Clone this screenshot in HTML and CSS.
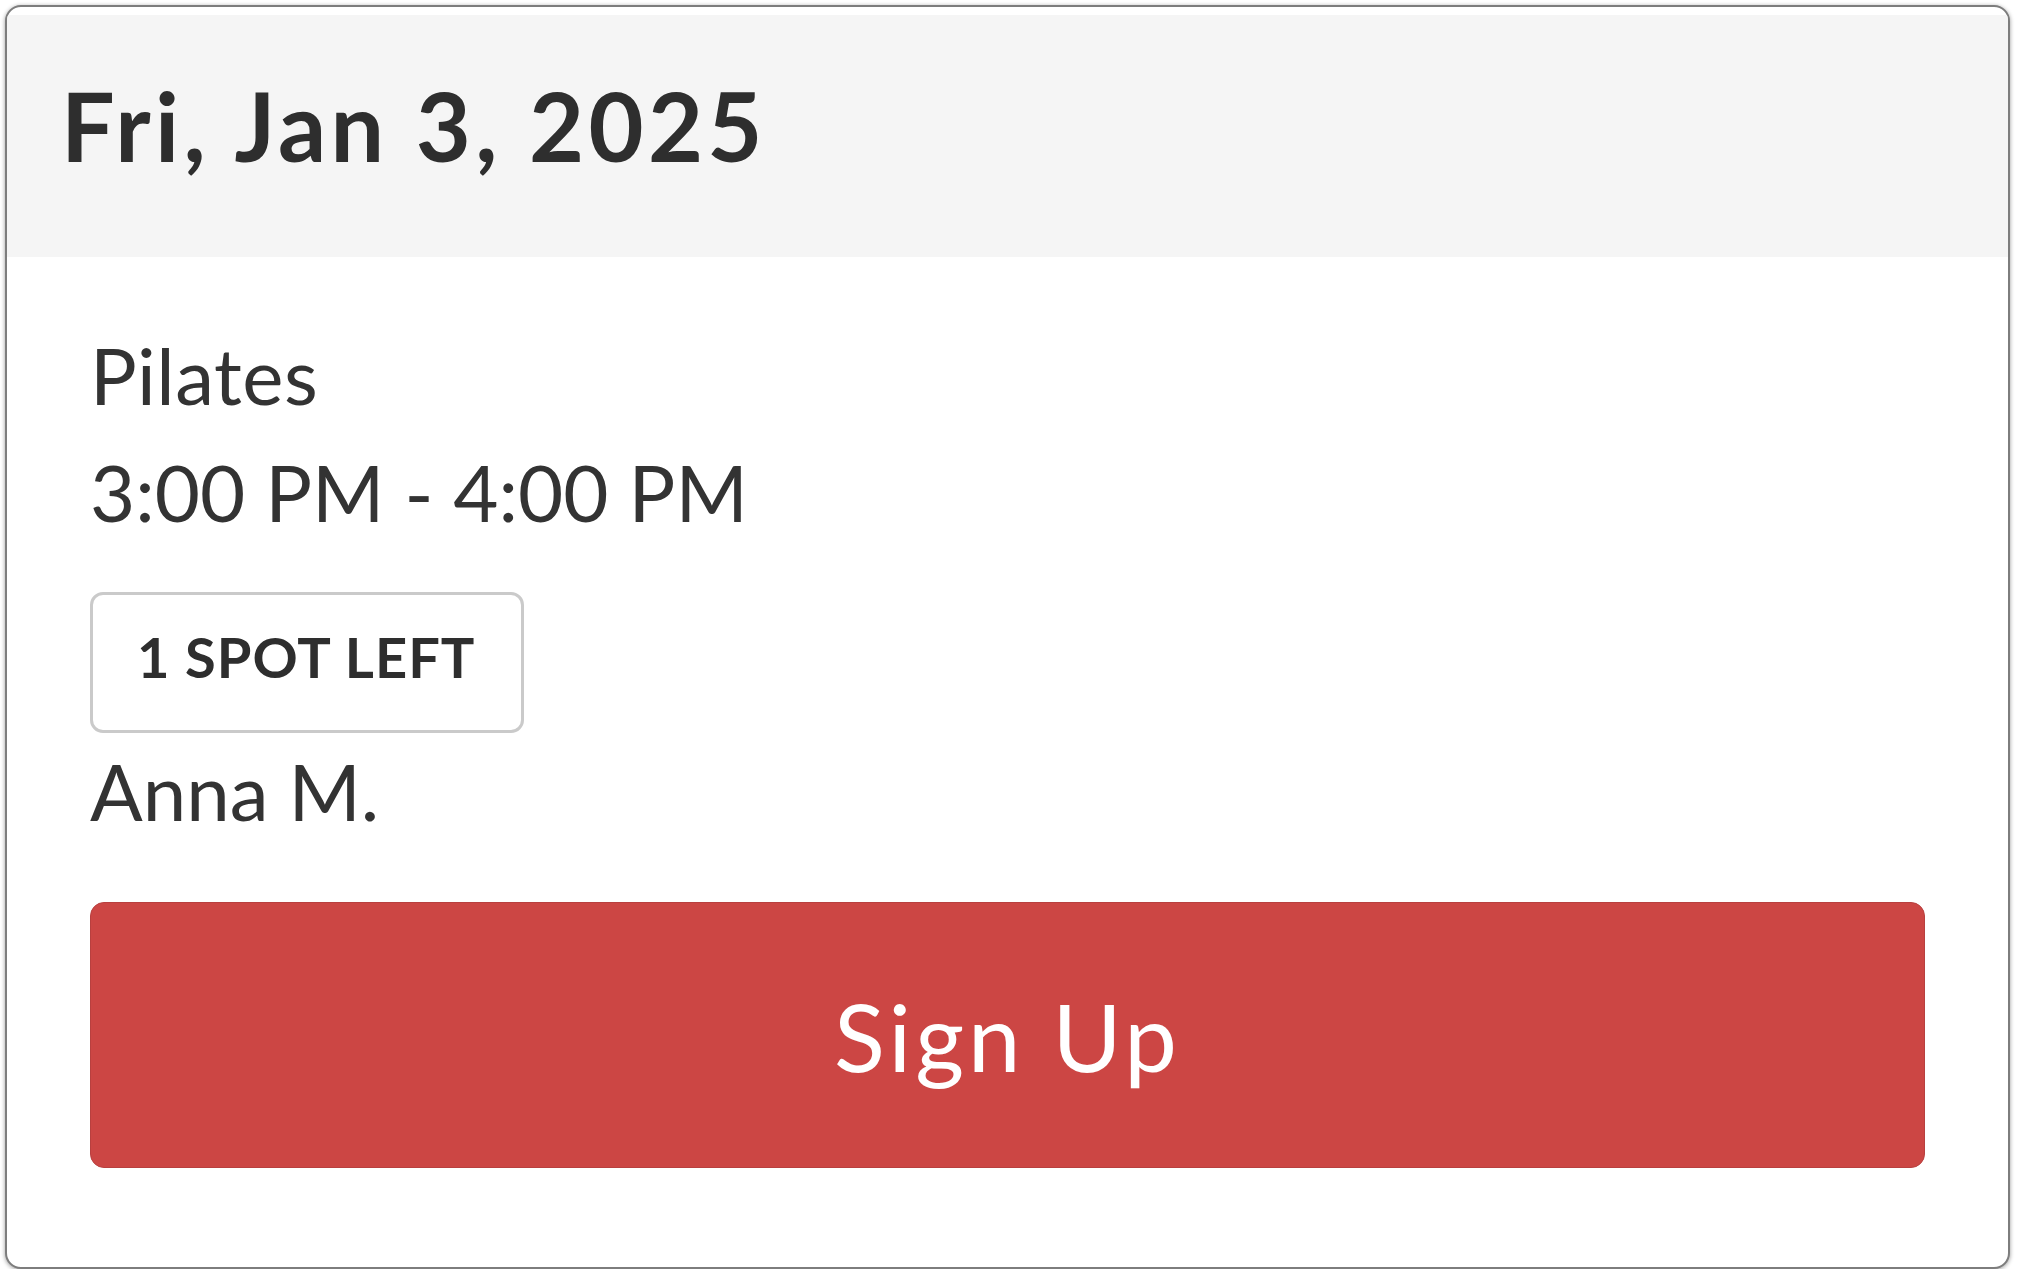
FILE: index.html
```html
<!DOCTYPE html>
<html lang="en">
<head>
    <meta charset="UTF-8">
    <meta name="viewport" content="width=device-width, initial-scale=1.0">
    <title>Class Sign Up</title>
    <link rel="stylesheet" href="styles.css">
</head>
<body>
    <div class="card">
        <div class="card-header">
            <h2 class="date">Fri, Jan 3, 2025</h2>
        </div>
        <div class="card-body">
            <div class="class-name">Pilates</div>
            <div class="class-time">3:00 PM - 4:00 PM</div>
            <div class="spots">1 SPOT LEFT</div>
            <div class="instructor">Anna M.</div>
            <button class="signup-btn">Sign Up</button>
        </div>
    </div>
</body>
</html>
```

FILE: styles.css
```css
* {
    margin: 0;
    padding: 0;
    box-sizing: border-box;
    font-family: Lato, "Liberation Sans", sans-serif;
}
body {
    background-color: #fff;
}
.card {
    margin: 5px 7px 0 5px;
    padding-top: 8px;
    background-color: #fff;
    border: 2px solid #7d7d7d;
    border-radius: 16px;
    box-shadow: 0 1px 4px rgba(0, 0, 0, 0.4);
    overflow: hidden;
}
.card-header {
    background-color: #f5f5f5;
    padding: 53px 0 75px 54px;
}
.date {
    font-size: 95px;
    font-weight: bold;
    line-height: 1.2;
    letter-spacing: 4.3px;
    color: #2e2e2e;
}
.card-body {
    display: flex;
    flex-direction: column;
    align-items: flex-start;
    padding: 60px 83px 99px;
    color: #333;
}
.class-name, .class-time, .instructor {
    font-size: 78px;
    line-height: 117px;
}
.class-name {
    letter-spacing: 0.5px;
}
.spots {
    margin-top: 41px;
    height: 141px;
    padding: 28px 46px 0 44px;
    border: 3px solid #cacaca;
    border-radius: 13px;
    font-size: 56px;
    font-weight: bold;
    line-height: 1.2;
    letter-spacing: 1px;
    color: #2e2e2e;
}
.signup-btn {
    margin-top: 52px;
    width: 100%;
    height: 266px;
    display: flex;
    align-items: center;
    justify-content: center;
    background-color: #cc4644;
    border: 1px solid #b8403f;
    border-radius: 14px;
    color: #fff;
    font-size: 94px;
    letter-spacing: 4px;
    cursor: pointer;
}
```
